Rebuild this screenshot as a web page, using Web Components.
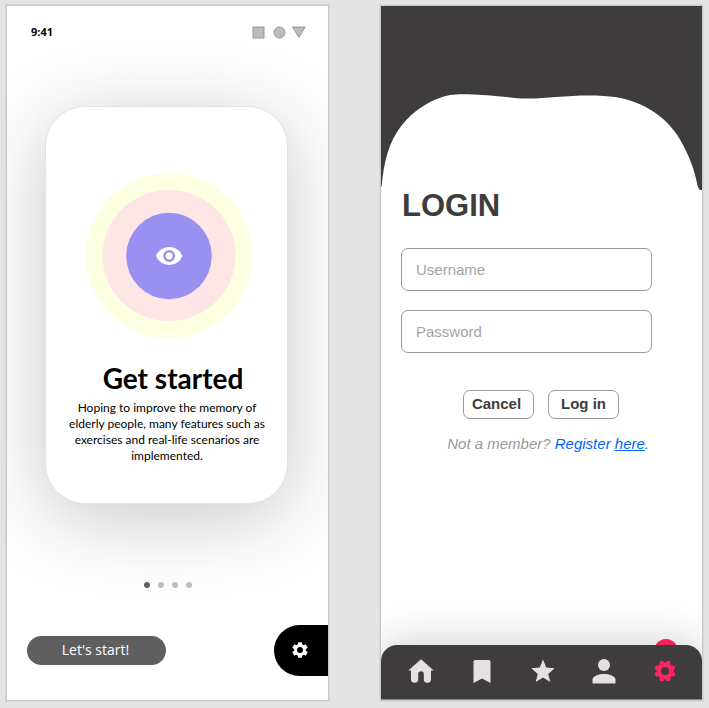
<!DOCTYPE html>
<html lang="en">
<head>
<meta charset="utf-8">
<meta name="viewport" content="width=device-width, initial-scale=1">
<title>App screens</title>
<style>
  html { background: #e4e4e4; }
  body { margin: 0; font-family: "Liberation Sans", Arial, sans-serif; color: #000; }
</style>
</head>
<body>
<screen-board>
  <phone-screen>
    <status-bar time="9:41"></status-bar>
    <intro-card heading="Get started">Hoping to improve the memory of elderly people, many features such as exercises and real-life scenarios are implemented.</intro-card>
    <page-dots count="4"></page-dots>
    <start-actions>Let's start!</start-actions>
  </phone-screen>
  <phone-screen>
    <wave-header></wave-header>
    <login-form></login-form>
    <nav-bar></nav-bar>
  </phone-screen>
</screen-board>

<script>
function define(name, html, setup) {
  customElements.define(name, class extends HTMLElement {
    constructor() {
      super();
      this.attachShadow({ mode: "open" }).innerHTML = html;
    }
    connectedCallback() {
      if (setup) setup(this, this.shadowRoot);
    }
  });
}

define("screen-board", `
  <style>
    :host { display: grid; grid-template-columns: 1fr 1fr; gap: 51px; box-sizing: border-box;
      min-height: 100vh; padding: 5px 6px 7px; }
  </style>
  <slot></slot>`);

define("phone-screen", `
  <style>
    :host { display: flex; flex-direction: column; min-width: 0; overflow: hidden;
      background: #fff; border: 1px solid #c9c9c9; box-shadow: 0 0 0 1px #d9d9d9; }
  </style>
  <slot></slot>`);

define("status-bar", `
  <style>
    :host { display: flex; justify-content: space-between; align-items: center;
      padding: 18px 22px 0 24px; height: 16px;
      font: 700 11px/16px "Open Sans", sans-serif; }
    svg { display: block; }
  </style>
  <span></span>
  <svg width="54" height="13" viewBox="0 0 54 13" fill="#bcbcbc" stroke="#969696" aria-hidden="true">
    <rect x="1" y="1" width="11" height="11"/><circle cx="27.500" cy="6.500" r="5.500"/><path d="M40.600 1H53.200L46.900 11.500Z"/>
  </svg>`, (el, root) => { root.querySelector("span").textContent = el.getAttribute("time"); });

define("intro-card", `
  <style>
    :host { display: flex; flex-direction: column; align-items: center; box-sizing: border-box;
      margin: 66px 40px 0 38px; padding: 65px 20px 39px; min-height: 397px;
      background: #fff; border: 1px solid #e3e3e3; border-radius: 40px;
      box-shadow: 0 14px 80px rgba(0,0,0,.22); font-family: Lato, sans-serif; text-align: center; }
    svg { display: block; flex: none; padding-left: 5px; }
    h1 { margin: 20px 0 0; padding-left: 13px; font-size: 28px; line-height: 36px; font-weight: 700; }
    p { margin: 4px 0 0; padding-left: 1px; font-size: 12px; line-height: 16px; }
  </style>
  <svg width="168" height="168" viewBox="0 0 168 168" role="img" aria-label="Eye">
    <ellipse cx="84" cy="83.500" rx="83.500" ry="82.500" fill="#fcffe0"/>
    <ellipse cx="84" cy="83.500" rx="66.500" ry="65.500" fill="#ffe6e6"/>
    <ellipse cx="84" cy="84" rx="42.800" ry="43.200" fill="#9a90f2"/>
    <path d="M71 84C76 72.100 92.500 72.100 97.300 84C92.500 95.900 76 95.900 71 84Z" fill="#fff"/>
    <circle cx="84.200" cy="84" r="4.700" fill="#fff" stroke="#9a90f2" stroke-width="2.500"/>
  </svg>
  <h1></h1>
  <p><slot></slot></p>`, (el, root) => { root.querySelector("h1").textContent = el.getAttribute("heading"); });

define("page-dots", `
  <style>
    :host { display: flex; justify-content: center; gap: 8px; margin: 78px 0 0; }
    i { width: 6px; height: 6px; border-radius: 50%; background: #bdbdbd; }
    i:first-of-type { background: #5f5f5f; }
  </style>`, (el, root) => {
    for (let n = 0; n < +el.getAttribute("count"); n++) root.append(document.createElement("i"));
  });

define("start-actions", `
  <style>
    :host { display: flex; justify-content: space-between; align-items: center;
      margin: auto 0 24px; padding-left: 20px; }
    button { border: 0; color: #fff; cursor: pointer; }
    .start { width: 139px; height: 29px; padding: 0 2px 1px 0; border-radius: 15px; background: #5f5f5f;
      font: 14px/20px "Open Sans", sans-serif; }
    .settings { display: flex; align-items: center; width: 54px; height: 51px; padding: 0 0 2px 17px;
      border-radius: 26px 0 0 26px; background: #000; }
  </style>
  <button class="start" type="button"><slot></slot></button>
  <button class="settings" type="button" aria-label="Settings">
    <svg width="18" height="18" viewBox="1 1 22 22" fill="#fff"><path d="M19.140 12.940c.04-.3.060-.61.060-.94s-.02-.64-.07-.94l2.030-1.580a.49.490 0 0 0 .12-.61l-1.920-3.320a.49.490 0 0 0-.59-.22l-2.390.96a7 7 0 0 0-1.620-.94l-.36-2.540A.48.480 0 0 0 13.920 2.400h-3.840a.48.480 0 0 0-.47.410l-.36 2.540c-.59.240-1.130.57-1.620.94l-2.390-.96a.48.480 0 0 0-.59.220L2.740 8.870a.48.480 0 0 0 .12.610l2.030 1.580c-.05.3-.09.630-.09.940s.02.640.07.940l-2.030 1.580a.49.490 0 0 0-.12.610l1.920 3.320c.12.220.37.290.59.220l2.390-.96c.5.380 1.030.7 1.620.94l.36 2.540c.05.240.24.410.48.410h3.840c.24 0 .44-.17.470-.41l.36-2.540a7 7 0 0 0 1.620-.94l2.390.96c.22.080.47 0 .59-.22l1.920-3.320a.48.480 0 0 0-.12-.61zM12 15.600a3.600 3.600 0 1 1 0-7.200 3.600 3.600 0 0 1 0 7.200z"/></svg>
  </button>`);

define("wave-header", `
  <style>
    :host { display: block; }
    svg { display: block; width: 100%; height: 184px; }
  </style>
  <svg viewBox="0 0 321 184" preserveAspectRatio="none" aria-hidden="true">
    <path fill="#3e3c3d" d="M0 0H321V184H319.500Q318 184 316.500 179.500C313.500 164 309 152 302 139C289 112 262 95.500 235.700 91.300C217 88.500 195 89.500 175 91C165 91.500 155 92.800 146 92.600C132 92.500 120 90 102 89C92 88.500 78 87.700 69 89C50 93 33 104 21 119C8 135 3 155 .5 181H0Z"/>
  </svg>`);

define("login-form", `
  <style>
    :host { display: block; padding: 0 50px 0 20px; color: #3e3c3d; }
    form { display: flex; flex-direction: column; }
    h2 { margin: 0 0 26px 1px; font-size: 31px; line-height: 32px; font-weight: 700; }
    input { box-sizing: border-box; width: 100%; height: 43px; padding: 0 14px; margin: 0 0 19px;
      border: 1px solid #999; border-radius: 7px; background: #fff; font: 15px/20px "Liberation Sans", Arial, sans-serif; }
    input::placeholder { color: #a3a3a3; opacity: 1; }
    .actions { display: flex; gap: 14px; justify-content: flex-end; padding: 18px 33px 0 0; }
    button { box-sizing: border-box; width: 71px; height: 29px; padding: 0 4px 1px 0; border: 1px solid #999;
      border-radius: 7px; background: #fff; color: inherit; cursor: pointer;
      font: 700 15px/20px "Liberation Sans", Arial, sans-serif; }
    button + button { padding-right: 0; }
    p { margin: 15px 3px 0 0; text-align: right; font-style: italic; font-size: 15px; line-height: 20px; color: #999; }
    b { font-weight: 400; color: #0062ff; }
    a { color: inherit; text-decoration: underline; }
  </style>
  <form>
    <h2>LOGIN</h2>
    <input type="text" aria-label="Username" placeholder="Username" autocomplete="username">
    <input type="password" aria-label="Password" placeholder="Password" autocomplete="current-password">
    <div class="actions"><button type="button">Cancel</button><button type="submit">Log in</button></div>
    <p>Not a member? <b>Register <a href="#register">here</a>.</b></p>
  </form>`);

define("nav-bar", `
  <style>
    :host { display: block; position: relative; isolation: isolate; margin-top: auto; }
    nav { display: flex; height: 55px; box-sizing: border-box; padding: 0 6px 2px 9px; background: #3e3c3d;
      border-bottom: 1px solid #8b8b8b; border-radius: 16px 16px 0 0; box-shadow: 0 -4px 40px rgba(0,0,0,.18); }
    a { flex: 1; display: flex; align-items: center; justify-content: center; color: #e4e1e3; }
    a.active { color: #ff2560; }
    svg { display: block; fill: currentColor; }
    .glow { position: absolute; z-index: 1; right: 24px; top: -6px; width: 24px; height: 24px;
      border-radius: 50%; background: #f3225b; clip-path: inset(0 0 18px 0); }
  </style>
  <span class="glow"></span>
  <nav aria-label="Main">
    <a href="#home" aria-label="Home"><svg width="26" height="26" viewBox="0 0 26 26"><path d="M13 1.200L25.700 12.500H23V21.200A3.600 3.600 0 0 1 15.800 21.200V16A2.800 2.800 0 0 0 10.200 16V21.200A3.600 3.600 0 0 1 3 21.200V12.500H.300Z"/></svg></a>
    <a href="#saved" aria-label="Saved"><svg width="18" height="26" viewBox="0 0 18 26"><path d="M2 2H16Q17.500 2 17.500 3.500V25L9 20.500L.500 25V3.500Q.500 2 2 2Z"/></svg></a>
    <a href="#favourites" aria-label="Favourites"><svg width="24" height="24" viewBox="0 0 24 24"><path d="M12 .500L15.200 8.500L23.700 9.200L17.200 14.900L19.300 23L12 18.600L4.700 23L6.800 14.900L.300 9.200L8.800 8.500Z"/></svg></a>
    <a href="#profile" aria-label="Profile"><svg width="24" height="26" viewBox="0 0 24 26"><circle cx="12" cy="7" r="6"/><path d="M.500 25.500V21.500C.500 18 7 16 12 16S23.500 18 23.500 21.500V25.500Z"/></svg></a>
    <a class="active" href="#settings" aria-label="Settings" aria-current="page"><svg width="22" height="22" viewBox="-11 -11 22 22">
      <circle r="6.300" fill="none" stroke="currentColor" stroke-width="4.600"/>
      <circle cx="-3.200" cy="-7.900" r="2.300"/><circle cx="3.200" cy="-7.900" r="2.300"/><circle cx="7.900" cy="-3.200" r="2.300"/><circle cx="7.900" cy="3.200" r="2.300"/>
      <circle cx="3.200" cy="7.900" r="2.300"/><circle cx="-3.200" cy="7.900" r="2.300"/><circle cx="-7.900" cy="3.200" r="2.300"/><circle cx="-7.900" cy="-3.200" r="2.300"/>
    </svg></a>
  </nav>`);
</script>
</body>
</html>
